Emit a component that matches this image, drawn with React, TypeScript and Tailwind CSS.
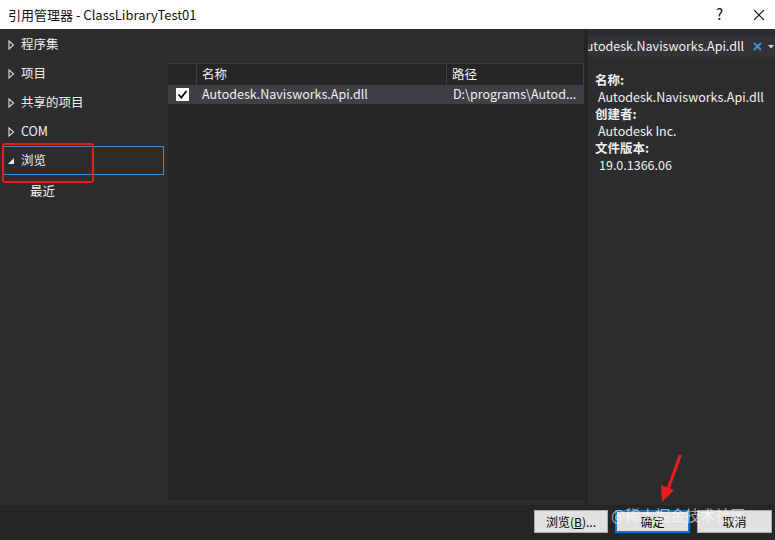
import React from "react";

const font = { fontFamily: '"Noto Sans CJK SC", "Noto Sans", sans-serif' };

function Caret({ open }: { open?: boolean }) {
  if (open) {
    return (
      <svg className="w-[8px] h-[8px]" viewBox="0 0 8 8">
        <polygon points="7,1 7,7 1,7" fill="#e8e8e8" />
      </svg>
    );
  }
  return (
    <svg className="w-[8px] h-[10px]" viewBox="0 0 8 10">
      <polygon points="2,1 6.5,5 2,9" fill="none" stroke="#d0d0d0" strokeWidth="1.2" />
    </svg>
  );
}

function TreeItem({ label, open, selected }: { label: string; open?: boolean; selected?: boolean }) {
  return (
    <div
      className={
        "h-[29px] flex items-center gap-[6px] " +
        (selected ? "border border-[#3e8fd6] ml-[2px] mr-[4px] pl-[4px]" : "pl-[7px]")
      }
    >
      <Caret open={open} />
      <span>{label}</span>
    </div>
  );
}

export default function App() {
  return (
    <div className="w-[775px] h-[540px] flex flex-col relative overflow-hidden text-[12.5px]" style={font}>
      {/* Title bar */}
      <div className="h-[29px] bg-white flex items-center justify-between pl-[8px] pr-[8px] text-[13px] text-[#111]">
        <span>引用管理器 - ClassLibraryTest01</span>
        <div className="flex items-center gap-[30px] pr-[2px]">
          <span className="text-[15px]">?</span>
          <svg className="w-[12px] h-[12px]" viewBox="0 0 12 12">
            <path d="M1 1L11 11M11 1L1 11" stroke="#222" strokeWidth="1.1" />
          </svg>
        </div>
      </div>

      {/* Body */}
      <div className="flex-1 flex flex-col bg-[#2d2d30] text-[#f1f1f1]">
        <div className="flex-1 flex min-h-0">
          {/* Tree */}
          <div className="w-[168px] shrink-0 pt-[1px]">
            <TreeItem label="程序集" />
            <TreeItem label="项目" />
            <TreeItem label="共享的项目" />
            <TreeItem label="COM" />
            <TreeItem label="浏览" open selected />
            <div className="h-[32px] flex items-center pl-[30px]">最近</div>
          </div>

          {/* List */}
          <div className="w-[416px] shrink-0 flex flex-col pt-[34px] pb-[5px]">
            <div className="flex-1 bg-[#252526] flex flex-col">
              <div className="h-[22px] flex border-t border-[#3a3a3d] bg-[#262627]">
                <div className="w-[29px] border-r border-[#3f3f46]" />
                <div className="w-[250px] border-r border-[#3f3f46] flex items-center pl-[5px]">名称</div>
                <div className="flex-1 flex items-center pl-[5px] border-r border-[#3f3f46]">路径</div>
              </div>
              <div className="h-[19px] flex items-center bg-[#3f3f46]">
                <div className="w-[29px] flex items-center justify-center">
                  <div className="w-[13px] h-[13px] bg-white flex items-center justify-center">
                    <svg className="w-[11px] h-[11px]" viewBox="0 0 11 11">
                      <path d="M1.5 5.5L4.3 8.5L9.5 2" fill="none" stroke="#000" strokeWidth="1.8" />
                    </svg>
                  </div>
                </div>
                <div className="w-[250px] pl-[5px]">Autodesk.Navisworks.Api.dll</div>
                <div className="flex-1 pl-[6px] whitespace-nowrap overflow-hidden">D:\programs\Autod...</div>
              </div>
            </div>
          </div>

          {/* Details */}
          <div className="flex-1 min-w-0 flex border-l-[4px] border-[#252526]">
            <div className="flex-1 min-w-0 flex flex-col pt-[7px]">
              <div className="h-[21px] bg-[#333337] flex items-center overflow-hidden">
                <div className="flex-1 min-w-0 overflow-hidden flex justify-end">
                  <span className="whitespace-nowrap shrink-0">Autodesk.Navisworks.Api.dll</span>
                </div>
                <svg className="w-[9px] h-[9px] ml-[9px] shrink-0" viewBox="0 0 9 9">
                  <path d="M1 1L8 8M8 1L1 8" stroke="#3a96dd" strokeWidth="1.8" />
                </svg>
                <svg className="w-[6px] h-[4px] ml-[6px] mr-[1px] shrink-0" viewBox="0 0 6 4">
                  <polygon points="0,0 6,0 3,3.5" fill="#d0d0d0" />
                </svg>
              </div>
              <div className="pl-[7px] pt-[14px] leading-[17px]">
                <div className="font-bold">名称:</div>
                <div className="pl-[3px]">Autodesk.Navisworks.Api.dll</div>
                <div className="font-bold">创建者:</div>
                <div className="pl-[3px]">Autodesk Inc.</div>
                <div className="font-bold">文件版本:</div>
                <div className="pl-[4px]">19.0.1366.06</div>
              </div>
            </div>
          </div>
        </div>

        {/* Bottom buttons */}
        <div className="h-[35px] bg-[#262626] border-t border-[#242424] flex items-start justify-end gap-[7px] pt-[4px] pr-[3px] text-[12px] text-black">
          <button className="w-[74px] h-[23px] bg-[#e1e1e1] border border-[#adadad]">浏览(<span className="underline">B</span>)...</button>
          <button className="w-[75px] h-[23px] bg-[#e1e1e1] border-2 border-[#0078d7]">确定</button>
          <button className="w-[75px] h-[23px] bg-[#e1e1e1] border border-[#adadad]">取消</button>
        </div>
      </div>

      {/* Annotation: red box */}
      <div className="absolute left-[2px] top-[143px] w-[92px] h-[40px] border-2 border-[#e0201c] rounded-[3px]" />

      {/* Annotation: red arrow */}
      <svg className="absolute left-[655px] top-[455px] w-[28px] h-[48px]" viewBox="0 0 28 48">
        <path d="M25 1L13 34" stroke="#ee1c1c" strokeWidth="3" strokeLinecap="round" />
        <polygon points="6,30 19,35 7,47" fill="#ee1c1c" />
      </svg>

      {/* Watermark */}
      <div className="absolute left-[611px] top-[504px] text-[15px] text-white/60 whitespace-nowrap">@稀土掘金技术社区</div>
    </div>
  );
}
